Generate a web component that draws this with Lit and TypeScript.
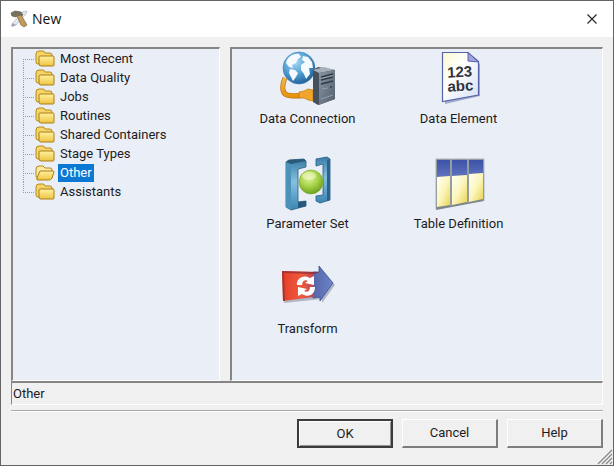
import { LitElement, html, css, svg } from "lit";
import { customElement, state } from "lit/decorators.js";
import { classMap } from "lit/directives/class-map.js";

const folders = [
  "Most Recent",
  "Data Quality",
  "Jobs",
  "Routines",
  "Shared Containers",
  "Stage Types",
  "Other",
  "Assistants",
];

const connectionIcon = svg`
  <defs>
    <radialGradient id="globe" cx="38%" cy="30%" r="75%">
      <stop offset="0" stop-color="#a9daf5"/><stop offset=".55" stop-color="#4f9dd0"/><stop offset="1" stop-color="#1d5c94"/>
    </radialGradient>
    <linearGradient id="cable" x1="0" y1="0" x2="0" y2="1">
      <stop offset="0" stop-color="#f3b64a"/><stop offset="1" stop-color="#e8930f"/>
    </linearGradient>
    <linearGradient id="server" x1="0" y1="0" x2="1" y2="1">
      <stop offset="0" stop-color="#8b98a5"/><stop offset="1" stop-color="#525d6a"/>
    </linearGradient>
  </defs>
  <path d="M5 27 C2 33 2 40 5 43 C9 46 18 45 34 44" fill="none" stroke="#b76f0a" stroke-width="5"/>
  <path d="M5 27 C2 33 2 40 5 43 C9 46 18 45 34 44" fill="none" stroke="url(#cable)" stroke-width="3.6"/>
  <circle cx="19" cy="17" r="16" fill="url(#globe)" stroke="#3c7cac" stroke-width=".6"/>
  <path d="M7 9 C10 4 15 2 19 3 L21 6 L18 8 L16 12 L12 14 L13 17 L9 16 L6 12Z" fill="#f4fafd"/>
  <path d="M10 18 L15 19 L18 22 L16 26 L13 30 L11 26 L9 22Z" fill="#f4fafd"/>
  <path d="M23 5 L28 6 L32 11 L33 17 L29 17 L30 23 L26 28 L24 23 L21 19 L21 14 L25 11 L22 9Z" fill="#f4fafd"/>
  <path d="M19 41 L24 40 L28 38 L33 39 V50 L28 49 L24 47 L19 47Z" fill="#f2a52c" stroke="#c47a11" stroke-width=".7"/>
  <path d="M33 19 L38 16 L55 19 V48 L38 54 L33 51Z" fill="#46505c"/>
  <path d="M33 19 L44 16 L55 19 L39 22Z" fill="#a6b0ba"/>
  <path d="M39 22 L55 19 V48 L39 54Z" fill="url(#server)"/>
  <path d="M41 26 L53 23 M41 29 L53 26 M41 33 L53 30" stroke="#303a45" stroke-width="1.3"/>
  <path d="M41 27.5 L53 24.5 M42 38 L48 37 M41 48 L53 44" stroke="#a3aeb8" stroke-width=".7"/>
  <circle cx="51" cy="36" r="1" fill="#35404a"/>`;

const elementIcon = svg`
  <defs>
    <linearGradient id="page" x1="0" y1="0" x2="1" y2="1">
      <stop offset="0" stop-color="#fbf9cf"/><stop offset=".4" stop-color="#ffffff"/><stop offset="1" stop-color="#d5def3"/>
    </linearGradient>
  </defs>
  <path d="M13 4 L39 3 L49 13 V45 L14 53Z" fill="#7080a8" opacity=".6"/>
  <path d="M11.5 1.5 H37 L47.5 10.5 V44 L11.5 50.5Z" fill="url(#page)" stroke="#5763a8" stroke-width="1.2"/>
  <path d="M37 1.5 L47.5 11 L37 10Z" fill="#a4a2dc" stroke="#5763a8"/>
  <g font-family="'Liberation Sans', Arial, sans-serif" font-weight="700" fill="#30343e" transform="rotate(-3 29 28)">
    <text x="29" y="26" font-size="15" text-anchor="middle">123</text>
    <text x="29" y="40" font-size="15" text-anchor="middle">abc</text>
  </g>`;

const parameterIcon = svg`
  <defs>
    <linearGradient id="steel" x1="0" y1="0" x2="0" y2="1">
      <stop offset="0" stop-color="#397da9"/><stop offset=".45" stop-color="#86c1de"/><stop offset="1" stop-color="#3a86b3"/>
    </linearGradient>
    <radialGradient id="ball" cx="42%" cy="32%" r="70%">
      <stop offset="0" stop-color="#e2f3a0"/><stop offset=".5" stop-color="#a9d64a"/><stop offset="1" stop-color="#6a9f1e"/>
    </radialGradient>
  </defs>
  <path d="M36 3 L47 1 L50 3 V44 L40 47 L36 45 V40 L43 39 V8 L36 10Z" fill="url(#steel)" stroke="#285c82" stroke-width=".8"/>
  <path d="M47 4 L50 3 V44 L47 45Z" fill="#29638c"/>
  <circle cx="31" cy="26" r="12" fill="url(#ball)" stroke="#7dab30" stroke-width=".6"/>
  <ellipse cx="29" cy="20" rx="7" ry="4" fill="#f2fad0" opacity=".55"/>
  <path d="M6 6 L9 4 L24 3 L26 5 V11 L18 13 V46 L26 45 V50 L11 54 L6 51Z" fill="url(#steel)" stroke="#285c82" stroke-width=".8"/>
  <path d="M6 6 L11 8 V54 L6 51Z" fill="#4b91ba"/>
  <path d="M6 6 L9 4 L24 3 L26 5 L11 8Z" fill="#2d5a7b"/>
  <path d="M18 46 L26 45 V50 L18 52Z" fill="#25587d"/>`;

const tableIcon = svg`
  <defs>
    <linearGradient id="head" x1="0" y1="0" x2="0" y2="1">
      <stop offset="0" stop-color="#3c52a8"/><stop offset="1" stop-color="#6273bd"/>
    </linearGradient>
    <linearGradient id="cells" x1="0" y1="0" x2="1" y2="1">
      <stop offset="0" stop-color="#fffff4"/><stop offset=".5" stop-color="#fcf6bd"/><stop offset="1" stop-color="#e9d451"/>
    </linearGradient>
  </defs>
  <path d="M5 3 H53 V45 L5 54Z" fill="#7b8786"/>
  <path d="M6 4 H19 V20 L6 21Z M21 4 H36 V19 L21 20Z M38 4 H52 V17 L38 18Z" fill="url(#head)"/>
  <path d="M6 21 L19 20 V49 L6 51Z" fill="url(#cells)"/>
  <path d="M21 20 L36 19 V46 L21 49Z" fill="url(#cells)"/>
  <path d="M38 18 L52 17 V43 L38 46Z" fill="url(#cells)"/>
  <path d="M5 3 V53 M20 3 V50 M37 3 V47 M53 3 V45 M5 3 H53" stroke="#afb4bb" fill="none"/>`;

const transformIcon = svg`
  <defs>
    <linearGradient id="red" x1="0" y1="0" x2="1" y2="0">
      <stop offset="0" stop-color="#e63e29"/><stop offset=".6" stop-color="#ef5a3b"/><stop offset="1" stop-color="#b9465a"/>
    </linearGradient>
    <linearGradient id="blue" x1="0" y1="0" x2="1" y2="0">
      <stop offset="0" stop-color="#5963a8"/><stop offset="1" stop-color="#6788c8"/>
    </linearGradient>
  </defs>
  <path d="M4 12 H41 V8 L55 24 L42 42 V38 L4 42Z" fill="#59657c" opacity=".4"/>
  <path d="M33 11 H39 V5 L53 22 L40 40 V36 L33 37Z" fill="url(#blue)" stroke="#405090" stroke-width=".8"/>
  <path d="M2 10 L34 11 V36 L3 40Z" fill="url(#red)"/>
  <path d="M2 10 L39 11 L35 13 L4 12 L5 40 L3 40Z" fill="#8e2a31" opacity=".7"/>
  <path d="M17 24 C16 17 24 13 30 17 L34 15 V24 L25 22 L28 20 C25 18 22 20 22 24Z" fill="#fff"/>
  <path d="M35 26 C35 34 28 37 22 33 L18 35 V26 L27 28 L24 30 C27 32 30 30 30 26Z" fill="#fff"/>`;

const items = [
  { label: "Data Connection", icon: connectionIcon },
  { label: "Data Element", icon: elementIcon },
  { label: "Parameter Set", icon: parameterIcon },
  { label: "Table Definition", icon: tableIcon },
  { label: "Transform", icon: transformIcon },
];

const closedFolder = html`
  <svg class="folder" viewBox="0 0 20 17" aria-hidden="true">
    <defs>
      <linearGradient id="gold" x1="0" y1="0" x2="0" y2="1">
        <stop offset="0" stop-color="#fff1a0"/><stop offset="1" stop-color="#eec440"/>
      </linearGradient>
    </defs>
    <path d="M1 4 Q1 1 4 1 H8 Q9.5 1 10 3 H15 Q17 3 17 5 V14 H3 Q1 14 1 12Z" fill="#f4d566" stroke="#b58a1b"/>
    <path d="M4 7 Q4 6 5 6 H18 Q19 6 19 7 V15 Q19 16 18 16 H6 Q4 16 4 14Z" fill="url(#gold)" stroke="#a97f16"/>
  </svg>`;

const openFolder = html`
  <svg class="folder" viewBox="0 0 20 17" aria-hidden="true">
    <defs>
      <linearGradient id="gold" x1="0" y1="0" x2="0" y2="1">
        <stop offset="0" stop-color="#fff1a0"/><stop offset="1" stop-color="#eec440"/>
      </linearGradient>
    </defs>
    <path d="M1 5 Q1 2 4 2 H8 L10 4 H15 Q17 4 17 6 V14 H3 Q1 14 1 12Z" fill="#fbeaa0" stroke="#b58a1b"/>
    <path d="M5 7 H18 Q19 7 19 8 L17 14 Q16 16 14 16 H3 Q1 16 2 14Z" fill="url(#gold)" stroke="#a97f16"/>
  </svg>`;

@customElement("app-root")
export class AppRoot extends LitElement {
  @state() private selected = "Other";

  static styles = css`
    :host {
      display: block;
      font: 13px/16px Roboto, "Liberation Sans", Arial, sans-serif;
      color: #1c1c22;
    }
    * { box-sizing: border-box; }
    button { font: inherit; color: inherit; margin: 0; }
    .window {
      display: flex;
      flex-direction: column;
      min-height: 100vh;
      position: relative;
      background: #f0f0f0;
      border: 1px solid #626468;
    }
    .titlebar {
      display: flex;
      align-items: center;
      height: 36px;
      padding: 0 10px 0 9px;
      gap: 4px;
      background: #fff;
    }
    .logo { width: 18px; height: 18px; }
    .title {
      flex: 1;
      margin: 0;
      font: 14px/20px "Open Sans", "Noto Sans", sans-serif;
      color: #111;
    }
    .close {
      display: grid;
      place-items: center;
      width: 22px;
      height: 22px;
      padding: 0;
      border: 0;
      background: none;
    }
    .close svg { width: 10px; height: 10px; }
    .content {
      flex: 1;
      display: flex;
      flex-direction: column;
      padding: 10px 10px 17px;
    }
    .panes {
      flex: 1;
      display: grid;
      grid-template-columns: 209fr 373fr;
      gap: 10px;
    }
    .pane {
      background: #eaeef7;
      border: solid;
      border-width: 2px 1px 1px 2px;
      border-color: #858585 #fff #fff #858585;
    }
    .tree {
      list-style: none;
      margin: 0;
      padding: 0 0 0 10px;
    }
    .node {
      display: flex;
      align-items: center;
      height: 19px;
      background:
        repeating-linear-gradient(to bottom, #999ca3 0 1px, transparent 1px 2px) 0 0 / 1px 100% no-repeat,
        repeating-linear-gradient(to right, #999ca3 0 1px, transparent 1px 2px) 0 10px / 12px 1px no-repeat;
    }
    .node:first-child { background-position: 0 10px, 0 10px; }
    .node:last-child { background-size: 1px 10px, 12px 1px; }
    .entry {
      display: flex;
      align-items: center;
      gap: 3px;
      height: 19px;
      margin-left: 12px;
      padding: 0;
      border: 0;
      background: none;
    }
    .folder { width: 20px; height: 17px; }
    .name { padding: 1px 2px; }
    .selected .name { background: #0b78d4; color: #fff; }
    .items {
      display: grid;
      grid-template-columns: repeat(2, 151px);
      grid-auto-rows: 105px;
      align-content: start;
    }
    .item {
      display: flex;
      flex-direction: column;
      align-items: center;
      gap: 4px;
      padding: 2px 0 0;
      border: 0;
      background: none;
    }
    .picture { width: 56px; height: 56px; }
    .status {
      height: 24px;
      padding: 3px 1px;
      border: solid;
      border-width: 2px 1px 1px 1px;
      border-color: #858585 #fff #fff #858585;
    }
    .rule {
      width: 100%;
      height: 2px;
      margin: 5px 0 7px;
      border: 0;
      border-top: 1px solid #a8a8a8;
      background: #fff;
    }
    .actions {
      display: flex;
      justify-content: flex-end;
      gap: 9px;
    }
    .action {
      width: 96px;
      height: 29px;
      padding: 0;
      background: #f0f0f0;
      border: solid;
      border-width: 1px 2px 2px 1px;
      border-color: #fff #7d7d7d #7d7d7d #fff;
    }
    .primary { border: 2px solid #3b3b3b; box-shadow: inset 1px 1px #fff, inset -1px -1px #929292; }
    .grip {
      position: absolute;
      right: 0;
      bottom: 0;
      width: 16px;
      height: 16px;
    }
  `;

  render() {
    return html`
      <main class="window">
        <header class="titlebar">
          <svg class="logo" viewBox="0 0 18 18" aria-hidden="true">
            <path d="M12 2 L17 1 L16 4 L6 15 L1 16 L4 12Z" fill="#e3e8ee" stroke="#b3bac4" stroke-width=".8"/>
            <path d="M1 3 L5 1 L11 2 L13 5 L10 7 L8 5 L6 7 L2 6Z" fill="#77715f" stroke="#55503f" stroke-width=".6"/>
            <path d="M7 6 L11 5 L17 15 L14 17 L11 15Z" fill="#bf9b5e" stroke="#806238" stroke-width=".7"/>
            <path d="M2 13 L6 15 L2 17Z" fill="#9ba5b1"/>
          </svg>
          <h1 class="title">New</h1>
          <button class="close" aria-label="Close">
            <svg viewBox="0 0 10 10"><path d="M.5 .5 L9.5 9.5 M9.5 .5 L.5 9.5" stroke="#222" stroke-width="1.1"/></svg>
          </button>
        </header>
        <div class="content">
          <div class="panes">
            <nav class="pane" aria-label="Categories">
              <ul class="tree">
                ${folders.map((name) => html`
                  <li class="node">
                    <button
                      class=${classMap({ entry: true, selected: name === this.selected })}
                      @click=${() => (this.selected = name)}
                    >${name === this.selected ? openFolder : closedFolder}<span class="name">${name}</span></button>
                  </li>`)}
              </ul>
            </nav>
            <section class="pane items" aria-label="Items">
              ${items.map((item) => html`
                <button class="item">
                  <svg class="picture" viewBox="0 0 56 56" aria-hidden="true">${item.icon}</svg>
                  <span>${item.label}</span>
                </button>`)}
            </section>
          </div>
          <div class="status" role="status">${this.selected}</div>
          <hr class="rule" />
          <footer class="actions">
            <button class="action primary">OK</button>
            <button class="action">Cancel</button>
            <button class="action">Help</button>
          </footer>
        </div>
        <svg class="grip" viewBox="0 0 16 16" aria-hidden="true">
          <path d="M1 15 L15 1 M5 15 L15 5 M9 15 L15 9 M13 15 L15 13" stroke="#8a8a8a" stroke-width="1.3"/>
        </svg>
      </main>`;
  }
}
